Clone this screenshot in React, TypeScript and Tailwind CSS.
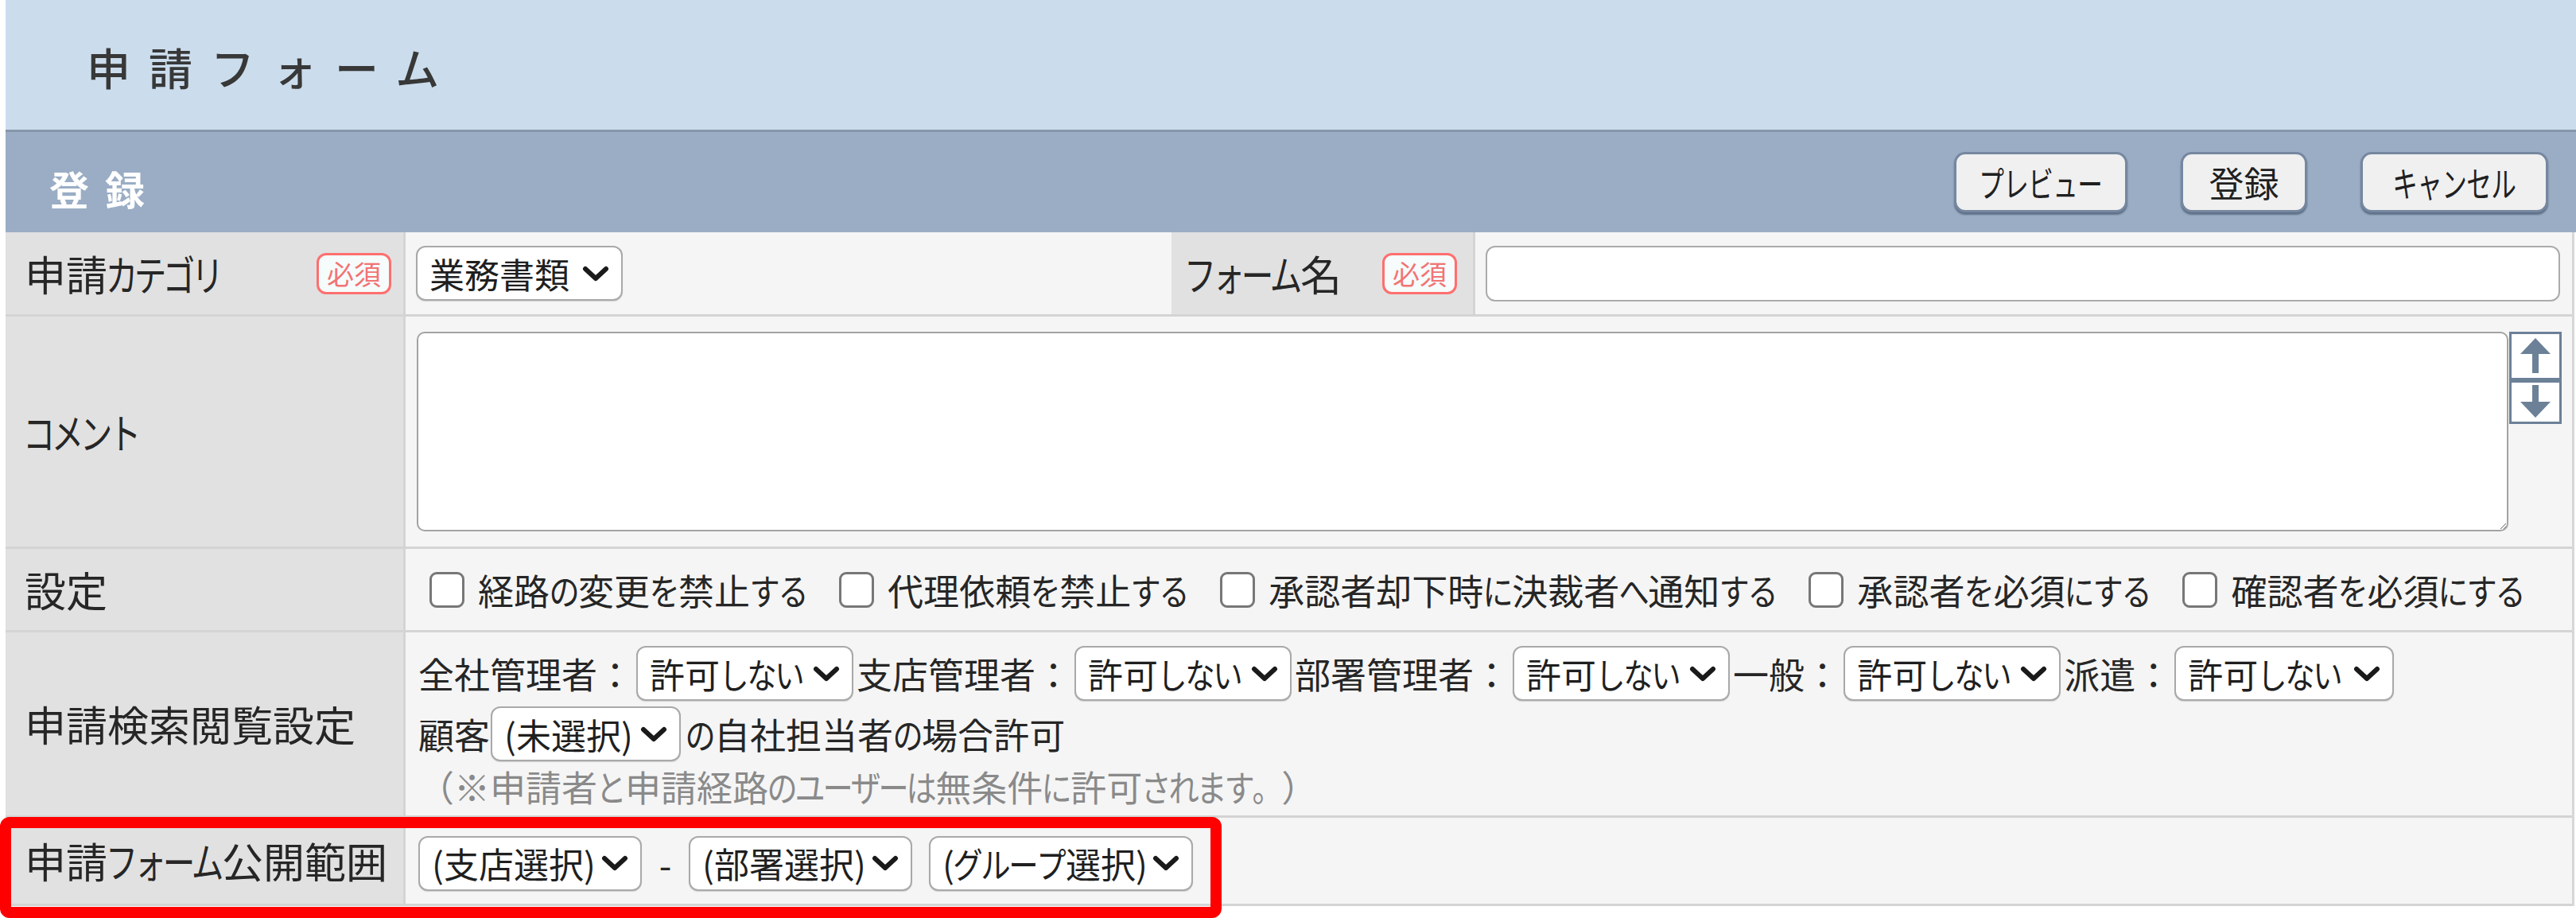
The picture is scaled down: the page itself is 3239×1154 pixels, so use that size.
import React from "react";

const isKana = (c: string) => /[\u3040-\u30ff\u3002]/.test(c);

function Jp({ t, box, sc }: { t: string; box: string; sc: string }) {
  return (
    <>
      {Array.from(t).map((ch, i) =>
        isKana(ch) ? (
          <span key={i} className={`inline-flex justify-center ${box}`}>
            <span className={`inline-block ${sc}`}>{ch}</span>
          </span>
        ) : (
          <span key={i}>{ch}</span>
        )
      )}
    </>
  );
}

function Chevron() {
  return (
    <svg width="34" height="20" viewBox="0 0 34 20" className="shrink-0">
      <polyline points="4,4 17,16 30,4" fill="none" stroke="#1a1a1a" strokeWidth="6" strokeLinecap="round" strokeLinejoin="round" />
    </svg>
  );
}

function Sel({ label, w }: { label: string; w: string }) {
  return (
    <div className={`flex items-center justify-between h-[69px] ${w} shrink-0 bg-white border-2 border-[#a9a9a9] rounded-[12px] pl-[15px] pr-[15px] text-[44px] leading-none text-[#1f1f1f] shadow-[0_1px_1px_rgba(0,0,0,0.15)]`}>
      <span className="whitespace-nowrap">
        <Jp t={label} box="w-[35px]" sc="scale-x-[0.85]" />
      </span>
      <Chevron />
    </div>
  );
}

function Badge() {
  return (
    <span className="inline-flex items-center justify-center w-[94px] h-[52px] border-[3px] border-[#ff6f6f] rounded-[12px] bg-[#f6fbfb] text-[#f27474] text-[34px] leading-none shrink-0">
      必須
    </span>
  );
}

function Check({ label }: { label: string }) {
  return (
    <div className="flex items-center gap-[17px]">
      <span className="w-[44px] h-[45px] border-[3px] border-[#777777] rounded-[9px] bg-white shrink-0" />
      <span className="whitespace-nowrap">
        <Jp t={label} box="w-[36px]" sc="scale-x-[0.85]" />
      </span>
    </div>
  );
}

function Label({ text, children }: { text: string; children?: React.ReactNode }) {
  return (
    <div className="w-[503px] shrink-0 bg-[#e1e1e1] border-r-[3px] border-[#d4d4d4] flex items-center justify-between pl-[24px] pr-[15px] text-[52px] leading-none">
      <span className="whitespace-nowrap">
        <Jp t={text} box="w-[36px]" sc="scale-x-[0.78]" />
      </span>
      {children}
    </div>
  );
}

function Btn({ label, w }: { label: string; w: string }) {
  return (
    <div className={`${w} h-[76px] flex items-center justify-center bg-[#f0f0f0] border-[3px] border-[#7687a0] rounded-[14px] shadow-[0_3px_2px_rgba(70,88,110,0.7)] text-[44px] leading-none text-[#1f1f1f] whitespace-nowrap`}>
      <Jp t={label} box="w-[31px]" sc="scale-x-[0.72]" />
    </div>
  );
}

function Colon({ t }: { t: string }) {
  return (
    <span className="whitespace-nowrap">
      {t}：
    </span>
  );
}

export default function App() {
  return (
    <div className="relative w-[3239px] h-[1154px] overflow-hidden bg-white pl-[7px] font-['Noto_Sans_CJK_JP','Noto_Sans',sans-serif] text-[#262626]">
      {/* Header */}
      <div className="h-[166px] bg-[#cbdcec] border-b-[3px] border-[#8797ab] flex items-center pl-[102px] pt-[4px]">
        <span className="text-[55px] font-medium tracking-[23px] leading-none text-[#383838]">申請フォーム</span>
      </div>

      {/* Bar */}
      <div className="h-[126px] bg-[#9aadc5] flex items-center justify-between pl-[55px] pr-[35px]">
        <span className="text-[50px] font-bold tracking-[20px] leading-none text-white pt-[14px]">登録</span>
        <div className="flex items-center gap-[67px]">
          <Btn label="プレビュー" w="w-[218px]" />
          <Btn label="登録" w="w-[159px]" />
          <Btn label="キャンセル" w="w-[236px]" />
        </div>
      </div>

      {/* Table */}
      <div className="w-[3230px] border-r-[3px] border-[#d7d7d7]">
        {/* Row 1 */}
        <div className="flex h-[106px] border-b-[3px] border-[#d4d4d4]">
          <Label text="申請カテゴリ">
            <Badge />
          </Label>
          <div className="w-[963px] shrink-0 bg-[#f5f5f5] flex items-center pl-[13px]">
            <Sel label="業務書類" w="w-[260px]" />
          </div>
          <div className="w-[382px] shrink-0 bg-[#e1e1e1] border-r-[3px] border-[#d4d4d4] flex items-center justify-between pl-[18px] pr-[20px] text-[52px] leading-none">
            <span className="whitespace-nowrap">
              <Jp t="フォーム名" box="w-[36px]" sc="scale-x-[0.78]" />
            </span>
            <Badge />
          </div>
          <div className="flex-1 bg-[#f5f5f5] flex items-center pl-[13px] pr-[15px]">
            <div className="flex-1 h-[70px] bg-white border-2 border-[#ababab] rounded-[12px]" />
          </div>
        </div>

        {/* Row 2 */}
        <div className="flex h-[292px] border-b-[3px] border-[#d4d4d4]">
          <Label text="コメント" />
          <div className="flex-1 bg-[#f5f5f5] flex items-start pl-[14px] pt-[19px]">
            <textarea readOnly className="w-[2630px] h-[251px] bg-white border-2 border-[#a3a3a3] rounded-[10px] outline-none" />
            <div className="flex flex-col ml-[1px]">
              <div className="w-[66px] h-[61px] border-[3px] border-[#6c8198] bg-white flex items-center justify-center">
                <svg width="60" height="55" viewBox="0 0 60 55">
                  <polygon points="30,5 49,25 11,25" fill="#6c8198" />
                  <rect x="26" y="22" width="8" height="27" fill="#6c8198" />
                </svg>
              </div>
              <div className="w-[66px] h-[55px] border-[3px] border-[#6c8198] bg-white flex items-center justify-center">
                <svg width="60" height="49" viewBox="0 0 60 49">
                  <rect x="26" y="3" width="8" height="24" fill="#6c8198" />
                  <polygon points="11,24 49,24 30,44" fill="#6c8198" />
                </svg>
              </div>
            </div>
          </div>
        </div>

        {/* Row 3 */}
        <div className="flex h-[105px] border-b-[3px] border-[#d4d4d4]">
          <Label text="設定" />
          <div className="flex-1 bg-[#f5f5f5] flex items-center pl-[30px] gap-[40px] text-[45px] leading-none">
            <Check label="経路の変更を禁止する" />
            <Check label="代理依頼を禁止する" />
            <Check label="承認者却下時に決裁者へ通知する" />
            <Check label="承認者を必須にする" />
            <Check label="確認者を必須にする" />
          </div>
        </div>

        {/* Row 4 */}
        <div className="flex h-[233px] border-b-[3px] border-[#d4d4d4]">
          <Label text="申請検索閲覧設定" />
          <div className="flex-1 bg-[#f5f5f5] flex flex-col pl-[16px] pt-[17px] text-[45px] leading-none">
            <div className="flex items-center">
              <Colon t="全社管理者" />
              <div className="ml-[4px] mr-[4px]"><Sel label="許可しない" w="w-[273px]" /></div>
              <Colon t="支店管理者" />
              <div className="ml-[4px] mr-[4px]"><Sel label="許可しない" w="w-[273px]" /></div>
              <Colon t="部署管理者" />
              <div className="ml-[4px] mr-[4px]"><Sel label="許可しない" w="w-[273px]" /></div>
              <Colon t="一般" />
              <div className="ml-[4px] mr-[4px]"><Sel label="許可しない" w="w-[273px]" /></div>
              <Colon t="派遣" />
              <div className="ml-[4px]"><Sel label="許可しない" w="w-[276px]" /></div>
            </div>
            <div className="flex items-center mt-[7px]">
              <span className="whitespace-nowrap">顧客</span>
              <div className="ml-[1px] mr-[6px]"><Sel label="(未選択)" w="w-[239px]" /></div>
              <span className="whitespace-nowrap">
                <Jp t="の自社担当者の場合許可" box="w-[36px]" sc="scale-x-[0.85]" />
              </span>
            </div>
            <div className="mt-[2px] leading-[60px] text-[#8a8a8a] whitespace-nowrap">
              <Jp t="（※申請者と申請経路のユーザーは無条件に許可されます。）" box="w-[35px]" sc="scale-x-[0.85]" />
            </div>
          </div>
        </div>

        {/* Row 5 */}
        <div className="flex h-[111px] border-b-[3px] border-[#d4d4d4]">
          <Label text="申請フォーム公開範囲" />
          <div className="flex-1 bg-[#f5f5f5] flex items-center pl-[16px] pt-[6px] text-[45px] leading-none">
            <Sel label="(支店選択)" w="w-[281px]" />
            <span className="w-[59px] text-center">-</span>
            <Sel label="(部署選択)" w="w-[281px]" />
            <div className="ml-[21px]"><Sel label="(グループ選択)" w="w-[332px]" /></div>
          </div>
        </div>
      </div>

      {/* Red highlight annotation */}
      <div className="absolute left-0 top-[1027px] w-[1536px] h-[127px] border-[14px] border-[#ff0000] rounded-[12px] pointer-events-none" />
    </div>
  );
}
